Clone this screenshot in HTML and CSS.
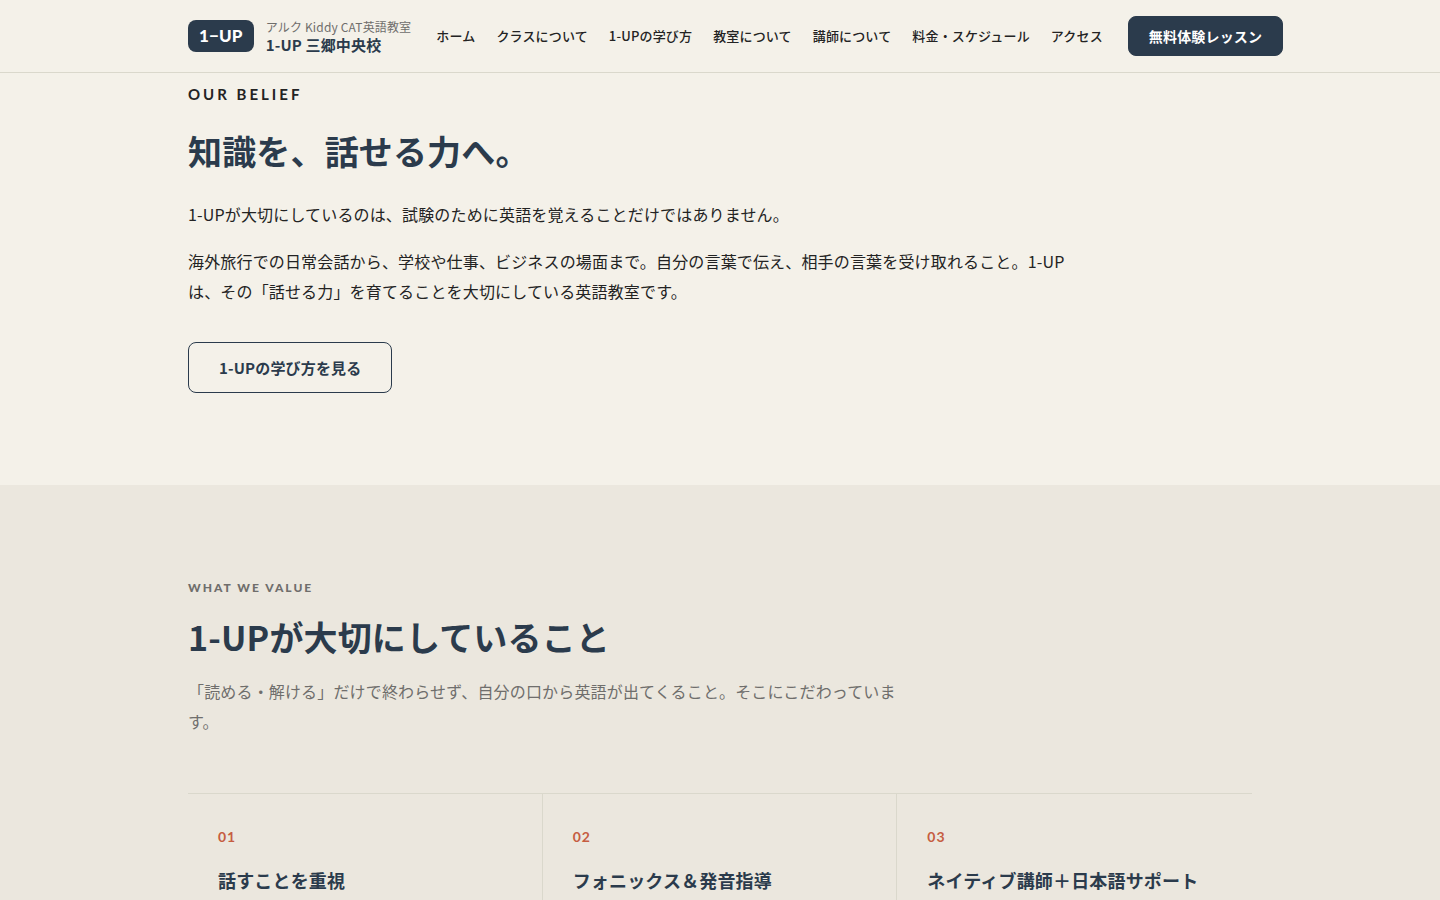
FILE: index.html
```html
<!DOCTYPE html>
<html lang="ja">
<head>
    <meta charset="UTF-8">
    <meta name="viewport" content="width=device-width, initial-scale=1.0">
    <title>1-UP 三郷中央校 | アルク Kiddy CAT英語教室</title>
    <link rel="stylesheet" href="styles.css">
</head>
<body>
    <header class="site-header">
        <div class="container header-inner">
            <a class="brand" href="#">
                <span class="brand-logo">1−UP</span>
                <span class="brand-text">
                    <span class="brand-sub">アルク Kiddy CAT英語教室</span>
                    <span class="brand-name">1-UP 三郷中央校</span>
                </span>
            </a>
            <nav>
                <ul class="nav-list">
                    <li><a href="#">ホーム</a></li>
                    <li><a href="#">クラスについて</a></li>
                    <li><a href="#">1-UPの学び方</a></li>
                    <li><a href="#">教室について</a></li>
                    <li><a href="#">講師について</a></li>
                    <li><a href="#">料金・スケジュール</a></li>
                    <li><a href="#">アクセス</a></li>
                </ul>
            </nav>
            <a class="btn btn-primary" href="#">無料体験レッスン</a>
        </div>
    </header>

    <main>
        <section class="belief">
            <div class="container">
                <p class="eyebrow eyebrow-large">OUR BELIEF</p>
                <h2 class="section-title">知識を、話せる力へ。</h2>
                <div class="belief-text">
                    <p>1-UPが大切にしているのは、試験のために英語を覚えることだけではありません。</p>
                    <p>海外旅行での日常会話から、学校や仕事、ビジネスの場面まで。自分の言葉で伝え、相手の言葉を受け取れること。1-UPは、その「話せる力」を育てることを大切にしている英語教室です。</p>
                </div>
                <a class="btn btn-outline" href="#">1-UPの学び方を見る</a>
            </div>
        </section>

        <section class="values">
            <div class="container">
                <p class="eyebrow">WHAT WE VALUE</p>
                <h2 class="section-title">1-UPが大切にしていること</h2>
                <p class="lead">「読める・解ける」だけで終わらせず、自分の口から英語が出てくること。そこにこだわっています。</p>
                <div class="value-grid">
                    <article class="value-card">
                        <p class="value-num">01</p>
                        <h3>話すことを重視</h3>
                    </article>
                    <article class="value-card">
                        <p class="value-num">02</p>
                        <h3>フォニックス＆発音指導</h3>
                    </article>
                    <article class="value-card">
                        <p class="value-num">03</p>
                        <h3>ネイティブ講師＋日本語サポート</h3>
                    </article>
                </div>
            </div>
        </section>
    </main>
</body>
</html>
```

FILE: styles.css
```css
:root {
    --bg: #f4f1e9;
    --bg-alt: #ebe7de;
    --navy: #2b3b4c;
    --text: #232323;
    --muted: #6f6e6c;
    --line: #dad8cc;
    --accent: #c65d41;
}
* {
    margin: 0;
    padding: 0;
    box-sizing: border-box;
}
body {
    font-family: "Noto Sans CJK JP", sans-serif;
    font-size: 16px;
    line-height: 30px;
    letter-spacing: 0.01em;
    color: var(--text);
    background-color: var(--bg);
}
a {
    color: inherit;
    text-decoration: none;
}
.container {
    max-width: 1120px;
    margin: 0 auto;
    padding: 0 28px;
}

/* Header */
.site-header {
    position: sticky;
    top: 0;
    background-color: var(--bg);
    border-bottom: 1px solid var(--line);
}
.header-inner {
    display: flex;
    align-items: center;
    gap: 25px;
    min-height: 72px;
    white-space: nowrap;
}
.brand {
    display: flex;
    align-items: center;
    gap: 12px;
    flex-shrink: 0;
}
.brand-logo {
    padding: 0 11px;
    border-radius: 8px;
    background-color: var(--navy);
    color: #fff;
    font-family: Lato, sans-serif;
    font-size: 17px;
    font-weight: 900;
    line-height: 32px;
}
.brand-text {
    display: flex;
    flex-direction: column;
    line-height: 18px;
}
.brand-sub {
    font-size: 12px;
    color: var(--muted);
}
.brand-name {
    font-size: 15px;
    font-weight: 700;
    color: var(--navy);
}
.nav-list {
    display: flex;
    gap: 21px;
    list-style: none;
    font-size: 13px;
    font-weight: 500;
}
.btn {
    display: inline-block;
    border: 1px solid var(--navy);
    border-radius: 8px;
    font-weight: 700;
    flex-shrink: 0;
}
.btn-primary {
    padding: 4px 20px;
    background-color: var(--navy);
    color: #fff;
    font-size: 14px;
}
.btn-outline {
    padding: 10px 30px;
    color: var(--navy);
    font-size: 15px;
    line-height: 29px;
}

/* Sections */
.eyebrow {
    font-family: Lato, sans-serif;
    font-size: 12px;
    font-weight: 900;
    line-height: 22px;
    letter-spacing: 2px;
    color: var(--muted);
}
.eyebrow-large {
    font-size: 15px;
    font-weight: 700;
    letter-spacing: 3px;
    color: var(--text);
}
.section-title {
    margin-top: 14px;
    font-size: 34px;
    font-weight: 700;
    line-height: 48px;
    color: var(--navy);
}
.belief {
    padding: 10px 0 92px;
}
.belief .section-title {
    margin-top: 22px;
}
.belief-text {
    max-width: 880px;
    margin: 24px 0 36px;
}
.belief-text p + p {
    margin-top: 17px;
}
.values {
    padding-top: 92px;
    background-color: var(--bg-alt);
}
.lead {
    max-width: 720px;
    margin-top: 15px;
    color: var(--muted);
}
.value-grid {
    display: grid;
    grid-template-columns: repeat(3, 1fr);
    margin-top: 57px;
    border-top: 1px solid var(--line);
}
.value-card {
    padding: 30px;
    border-right: 1px solid var(--line);
}
.value-card:last-child {
    border-right: none;
}
.value-num {
    font-family: Lato, sans-serif;
    font-size: 14px;
    font-weight: 700;
    line-height: 26px;
    letter-spacing: 1px;
    color: var(--accent);
}
.value-card h3 {
    margin-top: 16px;
    font-size: 18px;
    font-weight: 700;
    line-height: 28px;
    color: var(--navy);
}

@media (max-width: 900px) {
    .header-inner {
        flex-wrap: wrap;
        padding: 12px 28px;
    }
    .nav-list {
        flex-wrap: wrap;
    }
    .value-grid {
        grid-template-columns: 1fr;
    }
    .value-card {
        border-right: none;
        border-bottom: 1px solid var(--line);
    }
}
```
